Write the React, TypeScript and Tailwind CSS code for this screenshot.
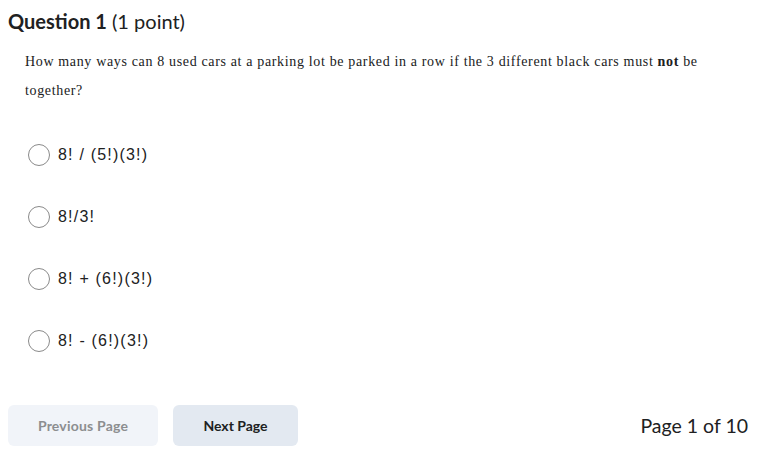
import React from "react";

const options = ["8! / (5!)(3!)", "8!/3!", "8! + (6!)(3!)", "8! - (6!)(3!)"];

export default function App() {
  return (
    <div className="w-[781px] h-[473px] bg-white relative" style={{ fontFamily: "Lato, sans-serif" }}>
      <div className="pl-[8px] pt-[9px]">
        <h1 className="text-[20px] leading-[24px] text-[#202122]">
          <span className="font-bold">Question 1</span> <span className="font-normal">(1 point)</span>
        </h1>
      </div>
      <p
        className="pl-[25px] pr-[60px] pt-[14px] text-[14px] leading-[29px] tracking-[0.65px] text-[#202122]"
        style={{ fontFamily: '"Liberation Serif", "Times New Roman", serif' }}
      >
        How many ways can 8 used cars at a parking lot be parked in a row if the 3 different black cars must <b>not</b> be together?
      </p>
      <div className="flex flex-col gap-[40px] pt-[39px] pl-[28px]">
        {options.map((o) => (
          <label key={o} className="flex items-center gap-[8px] h-[22px]">
            <span className="w-[22px] h-[22px] rounded-full border border-[#8a8a8a] bg-white shrink-0" />
            <span
              className="text-[16px] tracking-[1.2px] text-[#202122]"
              style={{ fontFamily: '"Liberation Sans", Arial, sans-serif' }}
            >
              {o}
            </span>
          </label>
        ))}
      </div>
      <div className="absolute left-[8px] right-[33px] top-[405px] flex items-center">
        <button className="w-[150px] h-[41px] rounded-[6px] bg-[#f1f4f9] text-[14px] tracking-[0.2px] font-bold text-[#8c8e90]">
          Previous Page
        </button>
        <button className="ml-[15px] w-[125px] h-[41px] rounded-[6px] bg-[#e3e9f1] text-[14px] font-bold text-[#202122]">
          Next Page
        </button>
        <div className="ml-auto text-[19.5px] text-[#202122]">Page 1 of 10</div>
      </div>
    </div>
  );
}
